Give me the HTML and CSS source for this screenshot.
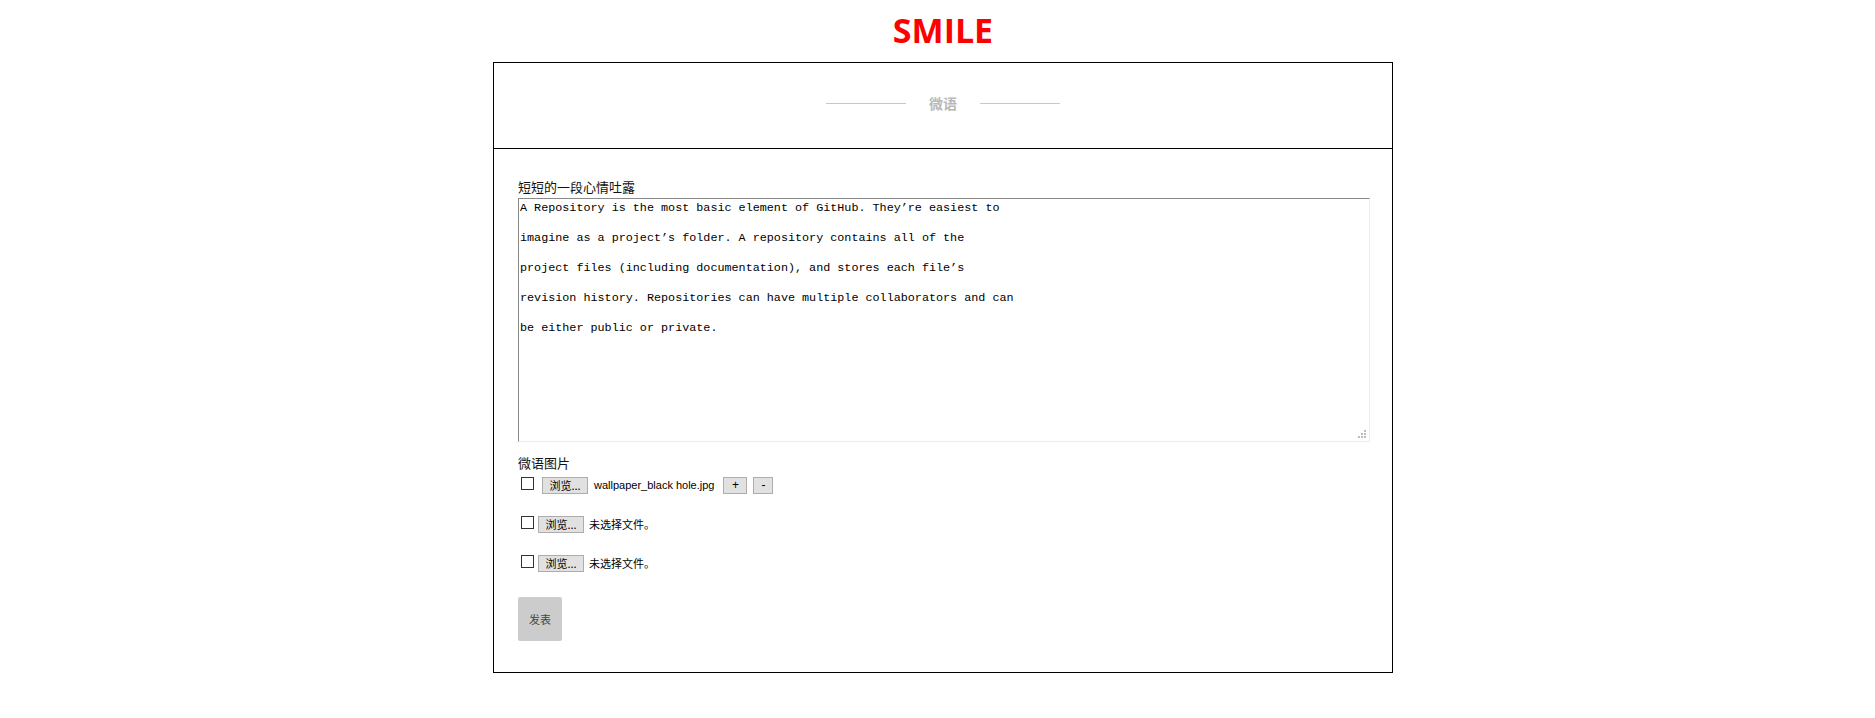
FILE: index.html
```html
<!DOCTYPE html>
<html lang="zh-CN">
<head>
<meta charset="utf-8">
<title>SMILE</title>
<link rel="stylesheet" href="styles.css">
</head>
<body>
<div class="page">
  <h1 class="logo">SMILE</h1>
  <div class="panel">
    <div class="panel-head">
      <span class="rule"></span>
      <span class="panel-title">微语</span>
      <span class="rule"></span>
    </div>
    <form class="panel-body">
      <label class="field-label" for="mood">短短的一段心情吐露</label>
      <div class="area-wrap">
        <textarea id="mood" class="mood-area">A Repository is the most basic element of GitHub. They’re easiest to

imagine as a project’s folder. A repository contains all of the

project files (including documentation), and stores each file’s

revision history. Repositories can have multiple collaborators and can

be either public or private.</textarea>
        <svg class="grip" width="9" height="9" viewBox="0 0 9 9"><rect x="6" y="0" width="2" height="2" fill="#bdbdbd"/><rect x="3" y="3" width="2" height="2" fill="#bdbdbd"/><rect x="6" y="3" width="2" height="2" fill="#bdbdbd"/><rect x="0" y="6" width="2" height="2" fill="#bdbdbd"/><rect x="3" y="6" width="2" height="2" fill="#bdbdbd"/><rect x="6" y="6" width="2" height="2" fill="#bdbdbd"/></svg>
      </div>
      <div class="field-label second">微语图片</div>
      <div class="file-rows">
        <div class="file-row">
          <span class="check"></span>
          <span class="file-input first"><button type="button" class="browse">浏览...</button><span class="file-name">wallpaper_black hole.jpg</span></span>
          <button type="button" class="mini plus">+</button>
          <button type="button" class="mini minus">-</button>
        </div>
        <div class="file-row">
          <span class="check"></span>
          <span class="file-input"><button type="button" class="browse">浏览...</button><span class="file-name cjk">未选择文件。</span></span>
        </div>
        <div class="file-row">
          <span class="check"></span>
          <span class="file-input"><button type="button" class="browse">浏览...</button><span class="file-name cjk">未选择文件。</span></span>
        </div>
      </div>
      <button type="button" class="submit">发表</button>
    </form>
  </div>
</div>
</body>
</html>
```

FILE: styles.css
```css
html, body {
  margin: 0;
  padding: 0;
  background: #fff;
}

body {
  font-family: "Noto Sans CJK SC", "Noto Sans", sans-serif;
  color: #000;
}

.page {
  padding-left: 11px;
}

.logo {
  margin: 0 0 8px;
  padding-top: 6px;
  height: 48px;
  line-height: 48px;
  text-align: center;
  font-family: "Open Sans", "Noto Sans", sans-serif;
  font-weight: 700;
  font-size: 34px;
  color: #ff0000;
}

.panel {
  width: 898px;
  margin: 0 auto;
  border: 1px solid #000;
}

.panel-head {
  height: 86px;
  box-sizing: border-box;
  padding-top: 30px;
  display: flex;
  justify-content: center;
  align-items: flex-start;
  gap: 23px;
  border-bottom: 1px solid #000;
}

.rule {
  width: 80px;
  height: 1px;
  margin-top: 10px;
  background: #c8c8c8;
}

.panel-title {
  height: 20px;
  line-height: 20px;
  font-size: 14px;
  font-weight: 700;
  color: #b8b8b8;
}

.panel-body {
  margin: 0;
  padding: 29px 22px 31px 24px;
  display: flex;
  flex-direction: column;
  align-items: flex-start;
}

.field-label {
  display: block;
  font-size: 13px;
  line-height: 18px;
  height: 18px;
  margin-bottom: 2px;
  color: #111;
}

.field-label.second {
  margin-top: 12px;
  margin-bottom: 5px;
}

.area-wrap {
  position: relative;
  width: 852px;
  height: 244px;
}

.mood-area {
  display: block;
  width: 852px;
  height: 244px;
  box-sizing: border-box;
  margin: 0;
  padding: 2px 1px 0;
  border-style: solid;
  border-width: 1px;
  border-color: #8a8a8a #ececec #ececec #8a8a8a;
  resize: none;
  overflow: hidden;
  font-family: "Liberation Mono", monospace;
  font-size: 11.75px;
  line-height: 15px;
  color: #000;
  background: #fff;
  outline: none;
}

.grip {
  position: absolute;
  right: 3px;
  bottom: 3px;
}

.file-rows {
  display: flex;
  flex-direction: column;
  gap: 22px;
}

.file-row {
  display: flex;
  align-items: flex-start;
  height: 17px;
}

.check {
  width: 13px;
  height: 13px;
  box-sizing: border-box;
  border: 1px solid #333;
  background: #fff;
  margin-left: 3px;
}

.file-input {
  display: flex;
  align-items: center;
  margin-left: 4px;
}

.file-input.first {
  margin-left: 8px;
}

.browse {
  width: 46px;
  height: 17px;
  box-sizing: border-box;
  margin: 0;
  padding: 0;
  border: 1px solid #adadad;
  background: #e1e1e1;
  font-family: "Noto Sans CJK SC", sans-serif;
  font-size: 11px;
  line-height: 15px;
  color: #000;
}

.file-name {
  margin-left: 6px;
  font-family: "Liberation Sans", Arial, sans-serif;
  font-size: 11px;
  line-height: 17px;
  color: #000;
}

.file-name.cjk {
  margin-left: 5px;
  font-family: "Noto Sans CJK SC", sans-serif;
  font-size: 11px;
}

.mini {
  height: 17px;
  box-sizing: border-box;
  margin: 0;
  padding: 0;
  border: 1px solid #adadad;
  background: #e1e1e1;
  font-family: "Liberation Sans", Arial, sans-serif;
  font-size: 12px;
  line-height: 15px;
  color: #000;
}

.plus {
  width: 24px;
  margin-left: 9px;
}

.minus {
  width: 20px;
  margin-left: 6px;
}

.submit {
  margin: 25px 0 0 0;
  width: 44px;
  height: 44px;
  padding: 0;
  border: none;
  border-radius: 2px;
  background: #cccccc;
  font-family: "Noto Sans CJK SC", sans-serif;
  font-size: 11px;
  color: #444;
}
```
